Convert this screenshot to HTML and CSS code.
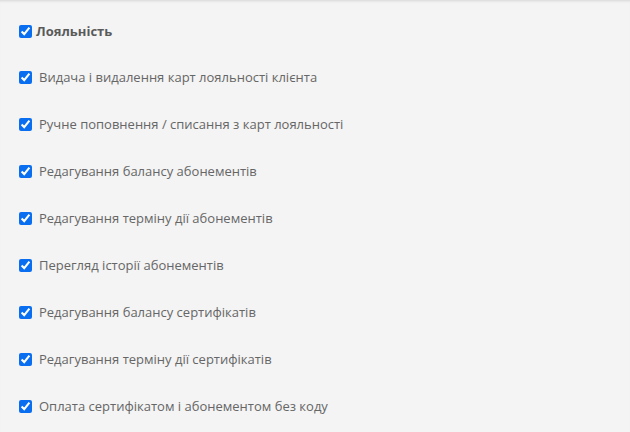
FILE: index.html
```html
<!DOCTYPE html>
<html lang="uk">
<head>
<meta charset="UTF-8">
<title>Права доступу</title>
<link rel="stylesheet" href="styles.css">
</head>
<body>
  <div class="panel">
    <label class="group-title">
      <input type="checkbox" checked>
      <span>Лояльність</span>
    </label>
    <div class="perm-list">
      <label class="perm"><input type="checkbox" checked><span>Видача і видалення карт лояльності клієнта</span></label>
      <label class="perm"><input type="checkbox" checked><span>Ручне поповнення / списання з карт лояльності</span></label>
      <label class="perm"><input type="checkbox" checked><span>Редагування балансу абонементів</span></label>
      <label class="perm"><input type="checkbox" checked><span>Редагування терміну дії абонементів</span></label>
      <label class="perm"><input type="checkbox" checked><span>Перегляд історії абонементів</span></label>
      <label class="perm"><input type="checkbox" checked><span>Редагування балансу сертифікатів</span></label>
      <label class="perm"><input type="checkbox" checked><span>Редагування терміну дії сертифікатів</span></label>
      <label class="perm"><input type="checkbox" checked><span>Оплата сертифікатом і абонементом без коду</span></label>
    </div>
  </div>
</body>
</html>
```

FILE: styles.css
```css
body {
  margin: 0;
  padding: 0;
  background: #f4f4f4;
  font-family: "Open Sans", Arial, sans-serif;
  font-size: 13px;
  color: #666;
}

.panel {
  height: 432px;
  padding: 21px 0 0 19px;
  box-sizing: border-box;
  box-shadow: inset 0 3px 3px -2px rgba(0, 0, 0, 0.12);
}

input[type="checkbox"] {
  width: 13px;
  height: 13px;
  margin: 0;
  accent-color: #0a6ef0;
}

.group-title {
  display: flex;
  align-items: center;
  gap: 4px;
  height: 20px;
  font-weight: bold;
  color: #5a5a5a;
}

.perm-list {
  display: flex;
  flex-direction: column;
  gap: 27px;
  margin-top: 26px;
}

.perm {
  display: flex;
  align-items: center;
  gap: 7px;
  height: 20px;
}
```
